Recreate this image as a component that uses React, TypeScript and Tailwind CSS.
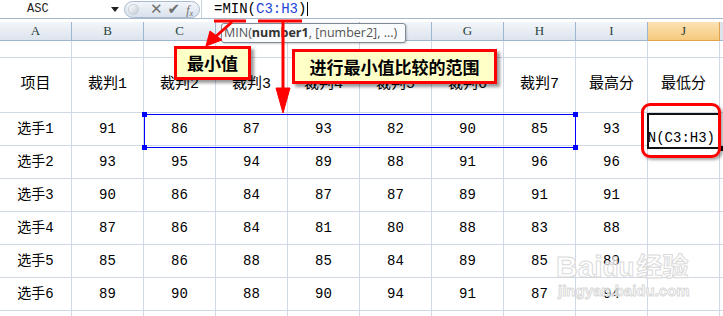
import React from "react";

const cols = ["A", "B", "C", "D", "E", "F", "G", "H", "I", "J"];
const heads = ["项目", "裁判1", "裁判2", "裁判3", "裁判4", "裁判5", "裁判6", "裁判7", "最高分", "最低分"];
const rows = [
  ["选手1", "91", "86", "87", "93", "82", "90", "85", "93", ""],
  ["选手2", "93", "95", "94", "89", "88", "91", "96", "96", ""],
  ["选手3", "90", "86", "84", "87", "87", "89", "91", "91", ""],
  ["选手4", "87", "86", "84", "81", "80", "88", "83", "88", ""],
  ["选手5", "85", "86", "88", "85", "84", "89", "85", "89", ""],
  ["选手6", "89", "90", "88", "90", "94", "91", "87", "94", ""],
];

const cellFont = { fontFamily: '"Liberation Mono", "Noto Sans CJK SC", monospace' };

function FormulaBar() {
  return (
    <div className="flex h-[19px] bg-white border-b border-[#a7b8cc]">
      <div className="relative w-[124px] flex items-center text-[12px] text-[#222]" style={cellFont}>
        <span className="ml-[27px]">ASC</span>
        <span className="absolute left-[111px] top-[7px] w-0 h-0 border-l-[4px] border-r-[4px] border-t-[5px] border-l-transparent border-r-transparent border-t-[#222]" />
      </div>
      <div className="mt-[1px] h-[17px] w-[76px] rounded-full border border-[#a9b9cf] bg-gradient-to-b from-[#f3f6fa] to-[#d8e1ec] flex items-center">
        <span className="ml-[3px] w-[11px] h-[11px] rounded-full bg-gradient-to-br from-white to-[#c4ccd6] border border-[#c4ccd6]" />
        <span className="ml-[11px] text-[15px] leading-none text-[#707070] font-bold" style={{ fontFamily: '"DejaVu Sans", sans-serif' }}>✕</span>
        <span className="ml-[5px] text-[15px] leading-none text-[#707070]" style={{ fontFamily: '"DejaVu Sans", sans-serif' }}>✔</span>
        <span className="ml-[6px] text-[12px] leading-none italic text-[#707070]" style={{ fontFamily: '"Liberation Serif", serif' }}>
          f<sub className="text-[8px]">x</sub>
        </span>
      </div>
      <div className="ml-[1px] flex-1 border-l border-[#c9d3de] flex items-center pl-[12px] text-[14px] text-black" style={cellFont}>
        <span>=MIN(</span>
        <span className="text-[#1d45d8]">C3:H3</span>
        <span>)</span>
        <span className="ml-[1px] w-px h-[14px] bg-black" />
      </div>
    </div>
  );
}

function Sheet() {
  return (
    <div className="grid grid-cols-[repeat(10,72px)_1fr]">
      {cols.map((c) => (
        <div
          key={c}
          className={
            c === "J"
              ? "h-[19px] flex items-center justify-center border-r border-b border-[#e3a24f] bg-gradient-to-b from-[#fbe3b5] to-[#f6c97c] text-[13px] text-[#27413e]"
              : "h-[19px] flex items-center justify-center border-r border-b border-[#9eb6ce] bg-gradient-to-b from-[#f3f6fa] to-[#dde4ee] text-[13px] text-[#27413e]"
          }
          style={{ fontFamily: '"Liberation Serif", serif' }}
        >
          {c}
        </div>
      ))}
      <div className="h-[19px] border-b border-[#9eb6ce] bg-[#dde4ee]" />
      {cols.map((c) => (
        <div key={"e" + c} className="h-[17px] border-r border-b border-[#d0d7e5]" />
      ))}
      <div className="h-[17px] border-b border-[#d0d7e5]" />
      {heads.map((h) => (
        <div key={h} className="h-[55px] flex items-center justify-center border-r border-b border-[#d0d7e5] text-[15px] text-black" style={cellFont}>
          {h}
        </div>
      ))}
      <div className="border-b border-[#d0d7e5]" />
      {rows.map((r, ri) => (
        <React.Fragment key={ri}>
          {r.map((v, ci) => (
            <div key={ci} className="h-[33px] flex items-center justify-center border-r border-b border-[#d0d7e5] text-[14px] text-black" style={cellFont}>
              {v}
            </div>
          ))}
          <div className="border-b border-[#d0d7e5]" />
        </React.Fragment>
      ))}
      {cols.map((c) => (
        <div key={"z" + c} className="h-[33px] border-r border-[#d0d7e5]" />
      ))}
      <div />
    </div>
  );
}

export default function App() {
  return (
    <div className="relative w-[723px] h-[316px] overflow-hidden bg-white">
      <FormulaBar />
      <div className="h-[3px] bg-white" />
      <Sheet />

      {/* selection range C3:H3 */}
      <div className="absolute left-[144px] top-[114px] w-[432px] h-[34px] border border-[#0000ff]" />
      <div className="absolute left-[142px] top-[112px] w-[5px] h-[5px] bg-[#0000ff]" />
      <div className="absolute left-[142px] top-[145px] w-[5px] h-[5px] bg-[#0000ff]" />
      <div className="absolute left-[573px] top-[112px] w-[5px] h-[5px] bg-[#0000ff]" />
      <div className="absolute left-[573px] top-[145px] w-[5px] h-[5px] bg-[#0000ff]" />

      {/* J3 edit cell */}
      <div className="absolute left-[647px] top-[113px] w-[74px] h-[36px] border-2 border-[#111] bg-white overflow-hidden flex items-end justify-end pb-[1px] pr-[4px] text-[14px] leading-[16px] text-black whitespace-nowrap" style={cellFont}>
        =MIN(C3:H3)
      </div>
      <div className="absolute left-[718px] top-[146px] w-[5px] h-[5px] bg-[#111]" />
      <div className="absolute left-[641px] top-[103px] w-[80px] h-[55px] rounded-[9px] border-[3px] border-[#ff0000] shadow-[2px_2px_3px_rgba(0,0,0,0.35)]" />

      {/* function tooltip */}
      <div className="absolute left-[221px] top-[23px] w-[185px] h-[20px] rounded-[3px] border border-[#808a96] bg-[#fafbfc] flex items-center pl-[2px] text-[12.5px] text-[#555] whitespace-nowrap shadow-[1px_1px_2px_rgba(0,0,0,0.2)]" style={{ fontFamily: '"Open Sans", "Liberation Sans", sans-serif' }}>
        MIN(<span className="font-bold text-[#333]">number1</span>, [number2], ...)
      </div>

      {/* red arrows */}
      <svg className="absolute left-0 top-0" width="723" height="316">
        <g fill="#ff0000" stroke="#ff0000">
          <line x1="214" y1="21" x2="246" y2="21" strokeWidth="3" />
          <line x1="258" y1="21" x2="302" y2="21" strokeWidth="3" />
          <line x1="232" y1="22" x2="214" y2="38" strokeWidth="3" />
          <polygon points="206,46 210,31 222,40" strokeWidth="1" />
          <line x1="283" y1="22" x2="283" y2="92" strokeWidth="3" />
          <polygon points="276,88 290,88 283,113" strokeWidth="1" />
        </g>
      </svg>

      {/* callouts */}
      <div className="absolute left-[174px] top-[46px] w-[77px] h-[34px] border-[3px] border-[#ff0000] bg-[#ffffc8] flex items-center justify-center text-[17px] font-bold text-black shadow-[3px_3px_3px_rgba(0,0,0,0.4)]" style={{ fontFamily: '"Noto Sans CJK SC", sans-serif' }}>
        最小值
      </div>
      <div className="absolute left-[292px] top-[49px] w-[205px] h-[35px] border-[3px] border-[#ff0000] bg-[#ffffc8] flex items-center justify-center text-[17px] font-bold text-black shadow-[3px_3px_3px_rgba(0,0,0,0.4)]" style={{ fontFamily: '"Noto Sans CJK SC", sans-serif' }}>
        进行最小值比较的范围
      </div>

      {/* watermark */}
      <div className="absolute left-[556px] top-[252px] flex items-center text-[30px] leading-none font-bold text-white/70 [-webkit-text-stroke:1px_#dadada]" style={{ fontFamily: '"Liberation Sans", "Noto Sans CJK SC", sans-serif' }}>
        <span>Bai</span>
        <span className="text-[26px]">du</span>
        <span className="ml-[2px] text-[26px]">经验</span>
      </div>
      <div className="absolute left-[558px] top-[283px] text-[15px] leading-none font-bold text-white/70 [-webkit-text-stroke:1px_#dadada]" style={{ fontFamily: '"Liberation Sans", sans-serif' }}>
        jingyan.baidu.com
      </div>
    </div>
  );
}
